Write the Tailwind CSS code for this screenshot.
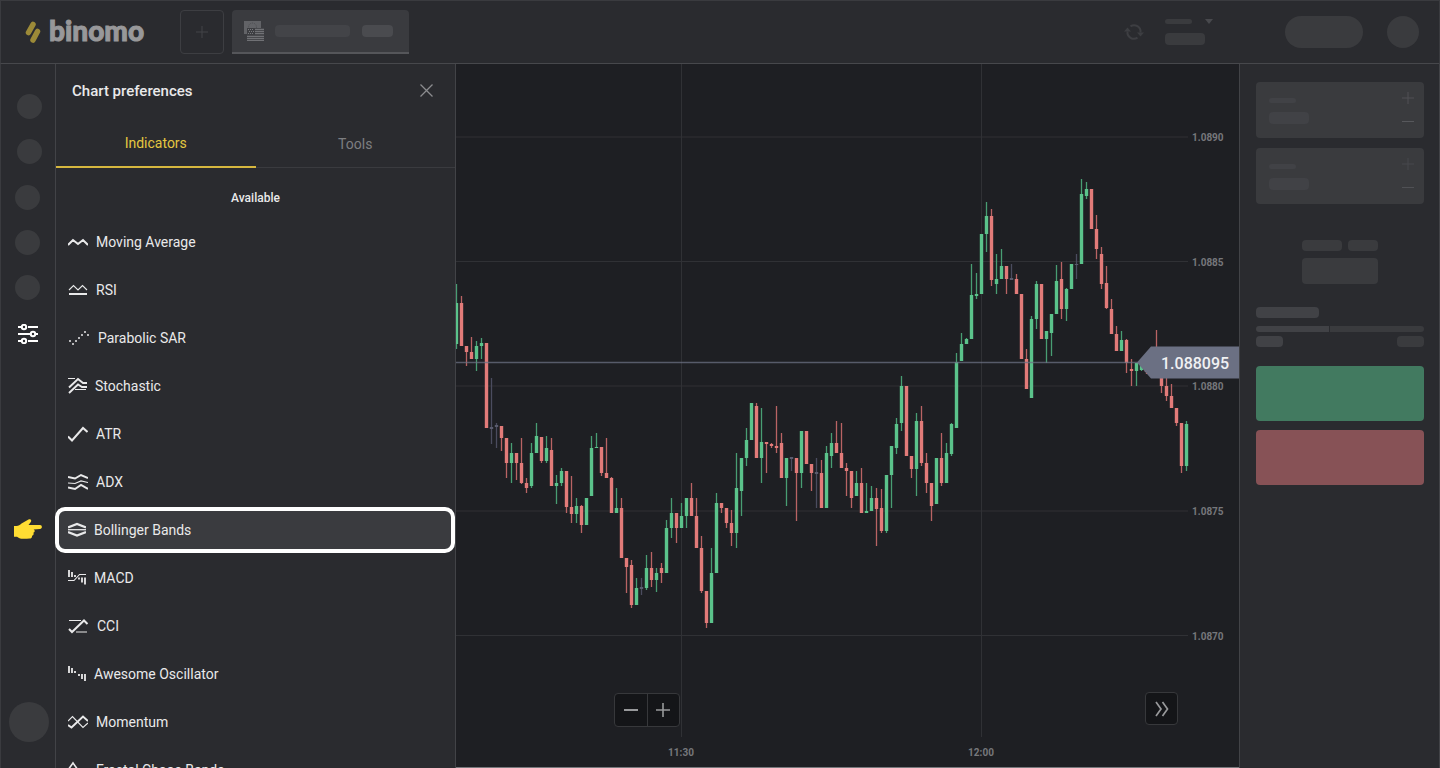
<!DOCTYPE html>
<html lang="en">
<head>
<meta charset="utf-8">
<meta name="viewport" content="width=device-width, initial-scale=1">
<title>Binomo – Chart preferences</title>
<script src="https://cdn.jsdelivr.net/npm/@tailwindcss/browser@4"></script>
</head>
<body class="flex h-screen flex-col overflow-hidden bg-[#2a2b2f] font-[Roboto,sans-serif] text-[#e9e9ea]">

<header class="flex h-16 shrink-0 items-center border border-[#3a3b3f] border-b-[#47484c] pr-5 pl-6">
  <a href="#" class="flex items-center gap-2" aria-label="binomo">
    <svg class="h-6 w-4" viewBox="0 0 16 24" fill="none" stroke="#9c8a38" stroke-width="5.500" stroke-linecap="round"><path d="M8 4.500 3.500 12.500M12.500 11.500 8 20"/></svg>
    <span class="w-[99px] pb-1 font-[Lato,sans-serif] text-[28px] leading-8 font-black text-[#98989a] [-webkit-text-stroke:1px_#98989a]">binomo</span>
  </a>
  <button class="ml-8 flex size-11 items-center justify-center rounded-sm border border-[#3d3e42]" aria-label="Add asset">
    <svg class="size-3" viewBox="0 0 12 12" stroke="#434448" stroke-width="1"><path d="M6 0v12M0 6h12"/></svg>
  </button>
  <button class="ml-2 flex h-11 w-[177px] items-center rounded-t-sm border-b-2 border-[#55565a] bg-[#3a3b3f] px-3" aria-label="Current asset">
    <svg class="size-5" viewBox="0 0 20 20"><path d="M0 0h17v13H0z" fill="#626367"/><circle cx="8.500" cy="6" r="4" fill="none" stroke="#4d4e52" stroke-dasharray="1 1"/><path d="M3 7h17v13H3z" fill="#48494d"/><path d="M11 8.500h9M11 10.500h9M11 12.500h9M3 15.500h17M3 17.500h17M3 19.500h17" stroke="#707175"/><path d="M3 7h8v7H3z" fill="#3d3e42"/><path d="M4 8.500h6M5 10.500h6M4 12.500h6" stroke="#77787c" stroke-dasharray="1 1"/></svg>
    <span class="ml-[11px] h-3 w-[75px] rounded bg-[#434448]"></span>
    <span class="ml-3 h-3 w-[31px] rounded bg-[#4a4b4f]"></span>
  </button>
  <div class="ml-auto flex items-center">
    <button aria-label="Refresh balance">
      <svg class="h-5 w-5" viewBox="0 0 20 20" fill="none" stroke="#3d3e42" stroke-width="2"><path d="M6.500 4.300A6.500 6.500 0 0 1 16.500 10.500M13.500 15.700A6.500 6.500 0 0 1 3.500 9.500"/><path d="M0 9.500h7L3.500 5.500zM13 10.500h7l-3.500 4z" fill="#3d3e42" stroke="none"/></svg>
    </button>
    <button class="ml-[21px] flex w-12 flex-col gap-[9px]" aria-label="Account">
      <span class="flex w-full items-center justify-between"><span class="h-[5px] w-[27px] rounded bg-[#3a3b3e]"></span><svg class="h-[5px] w-2" viewBox="0 0 8 5" fill="#48494d"><path d="M0 0h8L4 5z"/></svg></span>
      <span class="h-3 w-10 rounded bg-[#3a3b3e]"></span>
    </button>
    <button class="ml-[72px] h-8 w-[78px] rounded-full bg-[#3a3b3e]" aria-label="Deposit"></button>
    <button class="ml-6 size-8 rounded-full bg-[#3a3b3e]" aria-label="Profile"></button>
  </div>
</header>

<div class="flex min-h-0 flex-1">
  <nav class="flex w-[55px] shrink-0 flex-col border-l border-[#3a3b3f] pt-[30px] pb-[26px]" aria-label="Main">
    <div class="flex flex-col gap-5 pl-4">
      <button class="size-[25px] rounded-full bg-[#3a3b3e]" aria-label="Menu 1"></button>
      <button class="size-[25px] rounded-full bg-[#3a3b3e]" aria-label="Menu 2"></button>
    </div>
    <div class="mt-[21px] flex flex-col gap-5 pl-3.5">
      <button class="size-[25px] rounded-full bg-[#3a3b3e]" aria-label="Menu 3"></button>
      <button class="size-[25px] rounded-full bg-[#3a3b3e]" aria-label="Menu 4"></button>
      <button class="size-[25px] rounded-full bg-[#3a3b3e]" aria-label="Menu 5"></button>
    </div>
    <button class="mt-6 ml-[17px] size-5" aria-label="Chart preferences">
      <svg class="size-5" viewBox="0 0 20 20" fill="none" stroke="#fff" stroke-width="2"><path d="M0 3h4M10 3h10M0 10h13M18 10h2M0 17h4M10 17h10"/><circle cx="6" cy="3" r="2.200"/><circle cx="15" cy="10" r="2.200"/><circle cx="6" cy="17" r="2.200"/></svg>
    </button>
    <button class="mt-auto ml-2 size-10 rounded-full bg-[#3a3b3e]" aria-label="Support"></button>
  </nav>

  <section class="w-[401px] shrink-0 border-x border-[#424347]" aria-label="Chart preferences">
    <div class="flex h-[54px] items-center justify-between pr-[22px] pl-4">
      <h2 class="text-[15px] leading-5 font-medium">Chart preferences</h2>
      <button class="pb-0.5" aria-label="Close"><svg class="size-[13px]" viewBox="0 0 13 13" stroke="#8b8c8f" stroke-width="1.300"><path d="m.5.5 12 12M12.500.5l-12 12"/></svg></button>
    </div>
    <div class="flex h-[50px] text-sm" role="tablist">
      <button class="flex-1 border-b-2 border-[#d6b73f] pt-0.5 text-[#e4c740]" role="tab" aria-selected="true">Indicators</button>
      <button class="flex-1 border-b border-[#3a3b3f] pt-0.5 text-[#7d7e81]" role="tab" aria-selected="false">Tools</button>
    </div>
    <h3 class="pt-5 pb-2.5 text-center text-xs leading-5 font-medium">Available</h3>
    <ul class="text-sm">
      <li><button class="flex h-12 w-full items-center gap-2 px-3"><svg class="h-5 w-5" viewBox="0 0 20 20" fill="none" stroke="#e9e9ea" stroke-width="2"><path d="m0 13 5-5 5 4 5-4 5 5"/></svg>Moving Average</button></li>
      <li><button class="flex h-12 w-full items-center gap-2 px-3"><svg class="h-5 w-5" viewBox="0 0 20 20" fill="none" stroke="#e9e9ea"><path d="m1 10 4.500-4.500L10 10l4.500-4.500L19 10" stroke-width="1.100"/><path d="M1 14h18" stroke-width="2"/></svg>RSI</button></li>
      <li><button class="flex h-12 w-full items-center gap-2 px-3"><svg class="h-5 w-[22px]" viewBox="0 0 22 20" fill="#e9e9ea"><circle cx="2" cy="13" r="1"/><circle cx="5" cy="16" r="1"/><circle cx="8" cy="13" r="1"/><circle cx="11" cy="10" r="1"/><circle cx="14" cy="7" r="1"/><circle cx="17" cy="4" r="1"/><circle cx="20" cy="7" r="1"/></svg>Parabolic SAR</button></li>
      <li><button class="flex h-12 w-full items-center gap-2 px-3"><svg class="h-5 w-[19px]" viewBox="0 0 19 20" fill="none" stroke="#e9e9ea"><path d="m1 11.500 9-8.500 5 4h4M1 17l9-8.500 4 2.500h5" stroke-width="1.900"/><path d="M0 2.500h7M7 13.500h11" stroke-width="1.100"/></svg>Stochastic</button></li>
      <li><button class="flex h-12 w-full items-center gap-2 px-3"><svg class="h-5 w-5" viewBox="0 0 20 20" fill="none" stroke="#e9e9ea" stroke-width="2"><path d="m0 12.500 4 4L15 4l4.500 4"/></svg>ATR</button></li>
      <li><button class="flex h-12 w-full items-center gap-2 px-3"><svg class="h-5 w-5" viewBox="0 0 20 20" fill="none" stroke="#e9e9ea"><path d="m0 5 7 1.500L13 3l7 3M0 15.500l7 1.500 6-4 7 4" stroke-width="2"/><path d="m0 11 7 .5 6-2.500 7 1.500" stroke-width="1.200"/></svg>ADX</button></li>
      <li class="relative">
        <span class="absolute inset-y-px right-0 -left-px rounded-[10px] border-4 border-white bg-[#3a3b3f]"></span>
        <svg class="absolute top-3 right-full mr-3.5 h-[22px] w-7" viewBox="0 0 28 22" fill="#ffdd33"><path d="M0 8h2.500C4.500 8 6 7 7.500 5.500L14.500 1.500c2-1 3.500.8 2.300 2.500L14.500 7H26c2.500 0 2.500 3.800 0 4l-6.500.5c1.800.6 1.500 3-.2 3.200.8 1 .2 2.800-1.300 3 .3 1.500-.8 2.800-2.500 2.900-4 .2-8 .5-10.500-.6L3 18.700H0z"/></svg>
        <button class="relative flex h-12 w-full items-center gap-2 px-3"><svg class="h-5 w-[18px]" viewBox="0 0 18 20" fill="none" stroke="#e9e9ea"><path d="M0 7.500 9 4l9 3.500M0 12l9 3.500 9-3.500" stroke-width="2.200"/><path d="M0 9.700h18" stroke-width="1.300"/></svg>Bollinger Bands</button>
      </li>
      <li><button class="flex h-12 w-full items-center gap-2 px-3"><svg class="h-5 w-[18px]" viewBox="0 0 18 20" fill="none" stroke="#e9e9ea" stroke-width="1.800"><path d="M1 2v7M4 4v5M7 7v2M11 9.500v2M14 9.500v5M17 9.500v7"/><path d="M0 12.500h6l5.500-6H18" stroke-width="1.100"/></svg>MACD</button></li>
      <li><button class="flex h-12 w-full items-center gap-2 px-3"><svg class="h-5 w-[21px]" viewBox="0 0 21 20" fill="none" stroke="#e9e9ea"><path d="m1 13 3 3L16 4.500l3.500 3.500" stroke-width="2"/><path d="M1 4.500h12M8 16h11" stroke-width="1.200"/></svg>CCI</button></li>
      <li><button class="flex h-12 w-full items-center gap-2 px-3"><svg class="h-5 w-[18px]" viewBox="0 0 18 20" fill="none" stroke="#e9e9ea" stroke-width="1.800"><path d="M1 2v7M4 4v5M7 7v2M11 10v2M14 10v5M17 10v7"/></svg>Awesome Oscillator</button></li>
      <li><button class="flex h-12 w-full items-center gap-2 px-3"><svg class="h-5 w-5" viewBox="0 0 20 20" fill="none" stroke="#e9e9ea"><path d="m0 13 3.500 2.500L15 4.500 20 9" stroke-width="2"/><path d="m0 9 4.500-4.500 10.500 11L20 11" stroke-width="1.200"/></svg>Momentum</button></li>
      <li><button class="flex h-12 w-full items-center gap-2 px-3"><svg class="h-5 w-5" viewBox="0 0 20 20" fill="none" stroke="#e9e9ea" stroke-width="1.600"><path d="m0 10 5-7 5 7"/></svg>Fractal Chaos Bands</button></li>
    </ul>
  </section>

  <main class="relative min-w-0 flex-1 overflow-hidden border-b border-[#77787c] bg-[#1e1f23]">
    <svg class="block h-full w-full" viewBox="456 64 783 703" preserveAspectRatio="xMaxYMin slice" font-family="Roboto, sans-serif" role="img" aria-label="Price chart">
      <path d="M456 137h732M456 261.500h732M456 386h732M456 511h732M456 635.500h732M681.500 64v673M981.500 64v673" stroke="#303135" fill="none"/>
      <path id="green-wick" stroke="#489d73" stroke-width="1.300"/><path id="red-wick" stroke="#b96364" stroke-width="1.300"/><path id="flat-wick" stroke="#4b4c5f" stroke-width="1.300"/>
      <path id="green-body" fill="#5bc38b"/><path id="red-body" fill="#e27b79"/><path id="flat-body" fill="#5a5c6e"/>
      <path d="M456 362.500h690" stroke="#6b7083" stroke-opacity=".75" stroke-width="1.500"/>
      <path d="m1137 362.500 14-16h88v32h-88z" fill="#6b7083"/>
      <text x="1161" y="369" font-size="16" font-weight="500" fill="#f1f1f3">1.088095</text>
      <g font-size="10" font-weight="700" fill="#76777b">
        <text x="1192" y="141">1.0890</text><text x="1192" y="266">1.0885</text><text x="1192" y="390">1.0880</text><text x="1192" y="515">1.0875</text><text x="1192" y="640">1.0870</text>
        <text x="681" y="756" text-anchor="middle">11:30</text><text x="981" y="756" text-anchor="middle">12:00</text>
      </g>
    </svg>
    <div class="absolute bottom-10 left-[158px] flex h-[34px] w-[66px] rounded-sm border border-[#37383b] bg-[#141518]">
      <button class="flex flex-1 items-center justify-center border-r border-[#37383b]" aria-label="Zoom out"><svg class="size-[14px]" viewBox="0 0 14 14" stroke="#98999b" stroke-width="2"><path d="M0 7h14"/></svg></button>
      <button class="flex flex-1 items-center justify-center" aria-label="Zoom in"><svg class="size-[14px]" viewBox="0 0 14 14" stroke="#98999b" stroke-width="1.600"><path d="M0 7h14M7 0v14"/></svg></button>
    </div>
    <button class="absolute right-[61px] bottom-[42px] flex size-[33px] items-center justify-center rounded-sm border border-[#37383b] bg-[#141518]" aria-label="Go to latest"><svg class="size-4" viewBox="0 0 16 16" fill="none" stroke="#98999b" stroke-width="1.700"><path d="m2 1 5 7-5 7M8.500 1l5 7-5 7"/></svg></button>
  </main>

  <aside class="flex w-[201px] shrink-0 flex-col border-x border-[#424347] px-4 pt-[18px] pr-[15px]" aria-label="Trade">
    <div class="flex h-14 justify-between rounded bg-[#3a3b3e] pr-2.5 pl-[13px]">
      <div class="pt-4"><div class="h-[5px] w-[27px] rounded bg-[#414246]"></div><div class="mt-[9px] h-3 w-10 rounded bg-[#414246]"></div></div>
      <div class="flex flex-col justify-between pt-2.5 pb-2.5">
        <button aria-label="Increase amount"><svg class="size-3" viewBox="0 0 12 12" stroke="#505155"><path d="M6 0v12M0 6h12"/></svg></button>
        <button aria-label="Decrease amount"><svg class="h-3 w-3" viewBox="0 0 12 12" stroke="#57585c"><path d="M0 5.500h12"/></svg></button>
      </div>
    </div>
    <div class="mt-2.5 flex h-14 justify-between rounded bg-[#3a3b3e] pr-2.5 pl-[13px]">
      <div class="pt-4"><div class="h-[5px] w-[27px] rounded bg-[#414246]"></div><div class="mt-[9px] h-3 w-10 rounded bg-[#414246]"></div></div>
      <div class="flex flex-col justify-between pt-2.5 pb-2.5">
        <button aria-label="Increase time"><svg class="size-3" viewBox="0 0 12 12" stroke="#47484c"><path d="M6 0v12M0 6h12"/></svg></button>
        <button aria-label="Decrease time"><svg class="h-3 w-3" viewBox="0 0 12 12" stroke="#505155"><path d="M0 5.500h12"/></svg></button>
      </div>
    </div>
    <div class="mt-9 w-[76px] self-center">
      <div class="flex gap-1.5"><div class="h-[11px] w-10 rounded bg-[#3a3b3e]"></div><div class="h-[11px] flex-1 rounded bg-[#3a3b3e]"></div></div>
      <div class="mt-[7px] h-[26px] rounded bg-[#3a3b3e]"></div>
    </div>
    <div class="mt-[23px] h-[11px] w-[63px] rounded bg-[#414246]"></div>
    <div class="mt-2 flex h-1.5 gap-px overflow-hidden rounded-full"><div class="w-[73px] bg-[#414246]"></div><div class="flex-1 bg-[#3a3b3e]"></div></div>
    <div class="mt-1 flex justify-between"><div class="h-[11px] w-[27px] rounded bg-[#414246]"></div><div class="h-[11px] w-[27px] rounded bg-[#3a3b3e]"></div></div>
    <button class="mt-[19px] h-[55px] rounded-sm bg-[#427a60]" aria-label="Up"></button>
    <button class="mt-[9px] h-[55px] rounded-sm bg-[#875256]" aria-label="Down"></button>
  </aside>
</div>

<script>
// One candle per entry: direction, high, body top, body bottom, low
const candles = `g284,303,344,349 r296,303,346,346 r346,346,352,366 r337,352,359,359 g341,346,359,371 g338,343,346,359 r343,343,428,428 n378,427,429,444 n423,425,427,448 r426,426,438,451
r438,438,463,478 g443,453,463,483 r453,453,463,480 r438,463,483,484 r478,483,488,493 g443,453,486,488 g423,436,453,453 r437,437,461,463 g436,448,461,463 r438,450,486,486
g475,483,486,504 g468,471,483,486 r471,471,507,513 r476,507,514,523 g498,506,514,523 r505,506,525,533 g498,498,525,525 g436,448,496,496 g433,447,448,448 r447,447,473,476
r438,473,478,478 r477,478,513,513 g488,508,513,513 r498,508,558,558 r558,558,567,593 r560,565,605,608 g578,588,605,605 n578,587,589,595 g555,568,588,590 r552,568,580,587
g568,573,580,592 r563,568,573,583 g520,528,573,573 g498,513,528,538 r513,513,528,543 g503,516,528,528 g498,498,516,528 r483,498,516,516 r498,516,548,548 r536,548,591,593
r591,591,623,628 g548,573,623,623 g493,503,573,573 r503,503,508,513 r508,508,523,528 r510,523,533,546 g453,488,533,548 g458,458,491,516 g428,440,458,466 g403,403,440,440
r403,406,458,458 g408,442,458,483 r442,442,444,473 r443,444,446,448 r406,446,448,453 r433,443,478,478 g458,458,478,506 n457,457,459,471 r458,458,473,521 g431,431,473,488
r431,431,464,464 r464,464,473,491 n458,472,474,508 r460,473,508,508 g446,453,508,508 g433,443,456,468 r421,443,453,453 r423,453,468,468 r463,468,471,496 r471,471,498,508
g471,483,496,496 r468,483,513,513 g483,511,513,513 g486,498,511,511 r488,498,509,546 r489,508,531,533 g475,475,531,533 g446,446,475,508 g418,424,448,454 g376,386,423,431
r386,386,456,456 r456,456,469,478 g413,421,469,496 r406,421,463,466 r453,463,483,493 r483,483,506,521 g458,458,504,504 r433,458,483,486 g443,453,483,483 g423,424,454,456
g353,362,428,428 g333,344,361,361 g338,339,344,344 g264,295,339,339 g273,294,296,299 g234,234,294,294 g202,216,234,252 r209,216,280,286 g254,279,284,294 g249,266,279,279
r266,266,279,294 n264,278,280,280 r274,279,294,294 r294,294,359,359 r349,359,389,389 g316,319,398,398 g281,284,319,329 r284,284,339,339 g331,331,339,363 g314,314,333,356
g265,281,314,314 r262,279,309,319 g288,289,309,321 g264,264,289,289 n254,264,265,279 g179,194,264,264 g182,189,196,199 r189,189,229,229 r215,229,249,259 r247,254,284,289
r266,283,308,309 r299,309,334,334 r326,334,351,351 g331,340,351,351 r339,340,363,373 r359,369,371,386 g363,363,371,386 g363,364,370,371 r363,364,372,374 r360,362,372,374
r330,350,370,370 r370,370,386,393 r370,386,396,401 r384,396,408,408 r408,408,423,426 r423,423,466,473 g421,424,466,471`.split(/\s+/);
const names = { g: 'green', r: 'red', n: 'flat' };
const wicks = { g: '', r: '', n: '' }, bodies = { g: '', r: '', n: '' };
candles.forEach((c, i) => {
  const [high, top, bottom, low] = c.slice(1).split(',').map(Number);
  const x = 456.5 + i * 5;
  wicks[c[0]] += `M${x} ${high}V${low}`;
  bodies[c[0]] += `M${x - 1.7} ${top}h3.400V${bottom}h-3.400z`;
});
for (const k in names) {
  document.getElementById(names[k] + '-wick').setAttribute('d', wicks[k]);
  document.getElementById(names[k] + '-body').setAttribute('d', bodies[k]);
}
</script>
</body>
</html>
